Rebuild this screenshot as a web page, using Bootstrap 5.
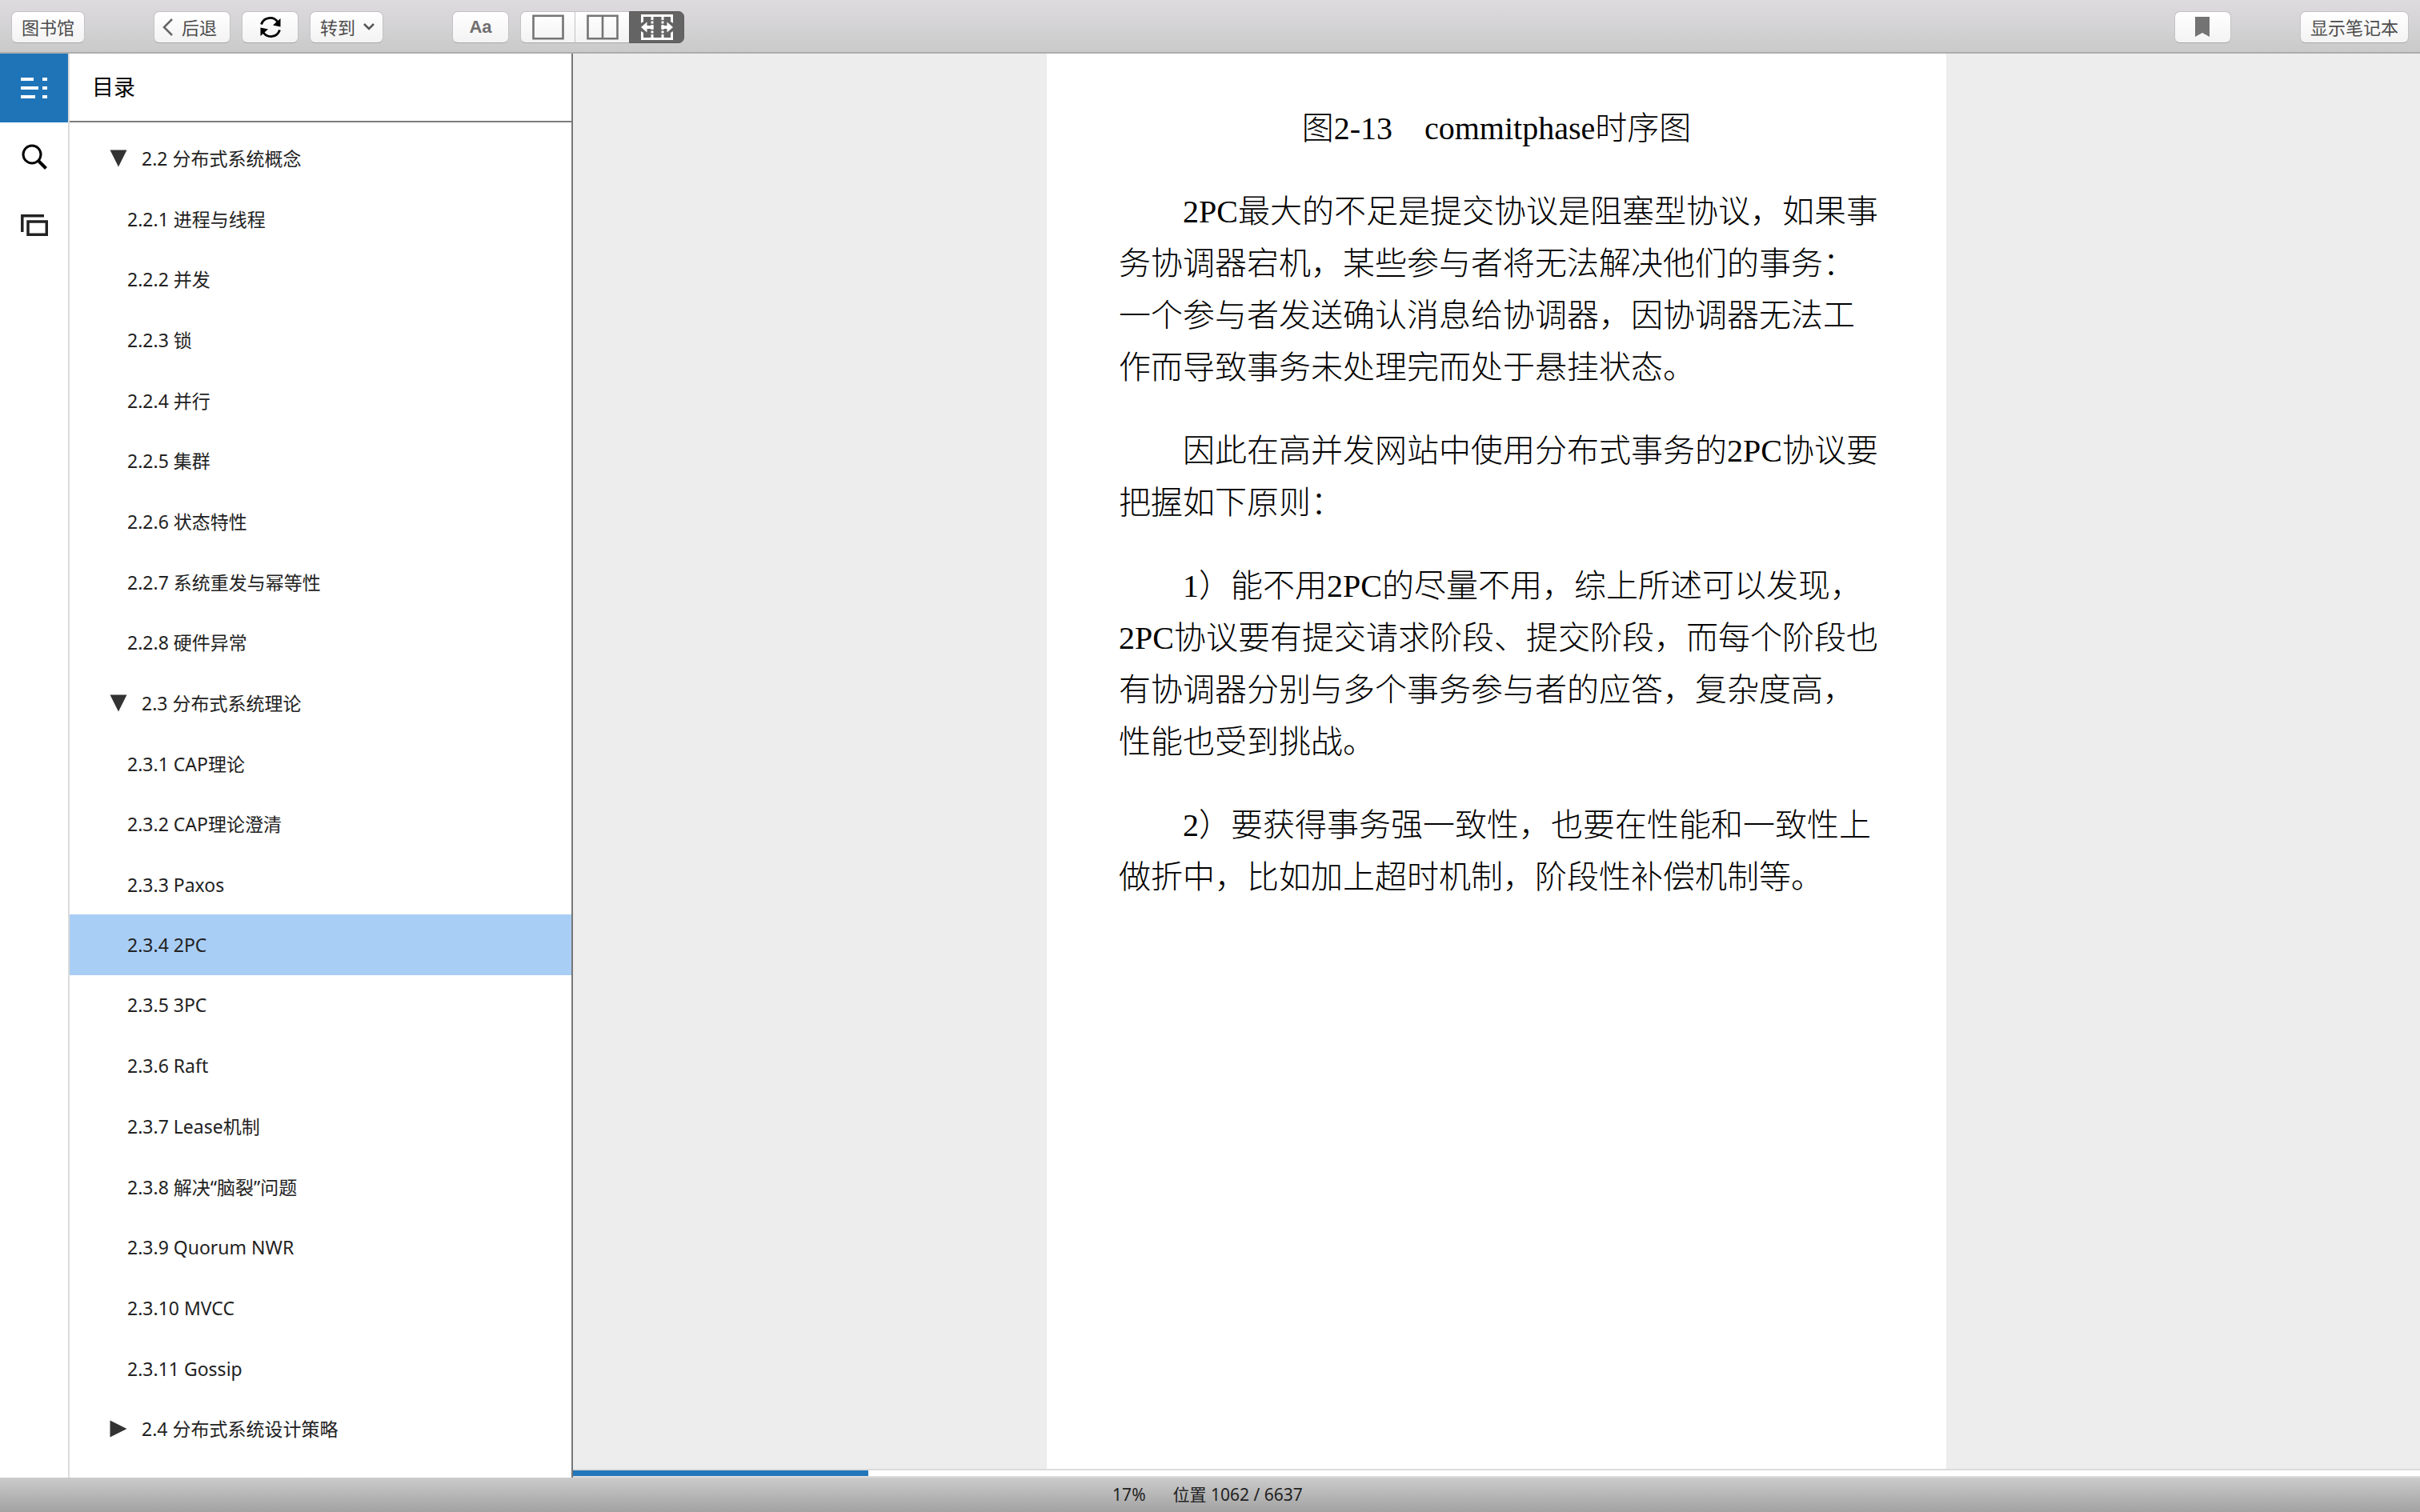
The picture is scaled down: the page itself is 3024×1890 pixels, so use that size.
<!DOCTYPE html>
<html lang="zh-CN">
<head>
<meta charset="utf-8">
<meta name="viewport" content="width=device-width, initial-scale=1">
<title>2.3.4 2PC</title>
<link href="https://cdn.jsdelivr.net/npm/bootstrap@5.3.0/dist/css/bootstrap.min.css" rel="stylesheet">
<style>
  body { font-family: "Noto Sans", "Noto Sans CJK SC", sans-serif; color: #222; background: #fff; }
  svg { display: block; flex: none; }

  .toolbar { height: 67px; padding: 3px 14px 0; border-bottom: 2px solid #adadad; background: linear-gradient(#dedbdf, #cacaca); }
  .tool { --bs-btn-color: #4d4d4d; --bs-btn-bg: transparent; --bs-btn-border-color: transparent; --bs-btn-border-radius: 7px;
    --bs-btn-padding-x: 12px; --bs-btn-padding-y: 0; --bs-btn-font-size: 22px; --bs-btn-line-height: 38px;
    height: 40px; white-space: nowrap; background: linear-gradient(#fff, #f3f3f3);
    border: 1px solid #c4c2c5; border-bottom-color: #a9a9a9; }
  .tool-icon { width: 71px; padding: 0; }
  .tool-gap { margin-left: 86px; }
  .tool-set { gap: 14px; }
  .tool-aa { font-family: "Liberation Sans", sans-serif; font-weight: 700; color: #6f6f6f; }
  .views .tool { width: 69px; padding: 0; color: #737573; }
  .views .tool.active { color: #fff; background: #646464; border-color: #5b5b5b; }

  .rail { width: 87px; border-right: 2px solid #dcdcdc; }
  .rail-btn { height: 86px; border: 0; border-radius: 0; padding: 0; color: #111; }
  .rail-btn.active { background: #1f74b8; color: #fff; }

  .contents { width: 629px; border-right: 2px solid #777; }
  .contents-head { height: 86px; padding-left: 28px; border-bottom: 2px solid #7c7c7c; font-size: 27px; color: #000; }
  .toc { padding: 7px 0 23px; --bs-list-group-color: #222; --bs-list-group-bg: transparent; }
  .toc .list-group-item { border: 0; padding: 0 16px 0 72px; font-size: 23px; line-height: 36px; }
  .toc .chapter { padding-left: 50px; gap: 18px; }
  .toc .list-group-item.active { background: #a9cef6; color: #222; }

  .reader { background: #ededed; }
  .sheet { width: 100%; max-width: 1124px; padding: 61px 90px; background: #fff; color: #000;
    font-family: "Liberation Serif", "Noto Sans CJK SC", serif; font-weight: 300; font-size: 40px; line-height: 65px; }
  .sheet p { margin-bottom: 39px; text-indent: 2em; white-space: nowrap; }
  .sheet figcaption { margin-bottom: 39px; text-align: center; }
  .read-track { height: 11px; border-radius: 0; border-top: 2px solid #dcdcdc; border-bottom: 2px solid #dcdcdc; background: #fff; }
  .read-track .progress-bar { background: #2277ba; }

  .statusbar { height: 43px; gap: 34px; padding-right: 6px; font-size: 21px; background: linear-gradient(#cbcbcb, #a2a2a2); }
</style>
</head>
<body class="vh-100 d-flex flex-column overflow-hidden">

<header class="toolbar d-flex align-items-center flex-shrink-0">
  <button type="button" class="btn tool">图书馆</button>
  <div class="tool-gap tool-set d-flex">
    <button type="button" class="btn tool d-flex align-items-center gap-2 px-2">
      <svg width="18" height="24" viewBox="0 0 18 24" fill="none" stroke="#666" stroke-width="2.5"><path d="M14 2 4 12l10 10"/></svg>
      <span class="pe-2">后退</span>
    </button>
    <button type="button" class="btn tool tool-icon d-flex align-items-center justify-content-center" aria-label="同步">
      <svg width="26" height="26" viewBox="0 0 26 26"><g fill="none" stroke="#000" stroke-width="2.8"><path d="M1.500 9.500A11.500 11.500 0 0 1 22 6.500"/><path d="M24.500 16.500A11.500 11.500 0 0 1 4 19.500"/></g><path d="M25.500 2v10.500l-9.500-2zM.5 24V13.500l9.500 2z"/></svg>
    </button>
    <button type="button" class="btn tool d-flex align-items-center gap-2 px-2">
      <span class="ps-1">转到</span>
      <svg width="18" height="12" viewBox="0 0 18 12" fill="none" stroke="#555" stroke-width="2.5"><path d="m3 2 6 6 6-6"/></svg>
    </button>
  </div>
  <div class="tool-gap tool-set d-flex">
    <button type="button" class="btn tool tool-icon tool-aa">Aa</button>
    <div class="btn-group views" role="group" aria-label="页面视图">
      <button type="button" class="btn tool d-flex align-items-center justify-content-center" aria-label="单栏">
        <svg width="40" height="32" viewBox="0 0 40 32" fill="none" stroke="currentColor" stroke-width="2.6"><path d="M1.500 1.800h37v28.400h-37z"/></svg>
      </button>
      <button type="button" class="btn tool d-flex align-items-center justify-content-center" aria-label="双栏">
        <svg width="40" height="32" viewBox="0 0 40 32" fill="none" stroke="currentColor" stroke-width="2.6"><path d="M1.500 1.800h37v28.400h-37zM20 2v28"/></svg>
      </button>
      <button type="button" class="btn tool active d-flex align-items-center justify-content-center" aria-label="多栏">
        <svg width="40" height="32" viewBox="0 0 40 32"><path fill="#fff" d="M0 0h40v32H0z"/><path fill="#646464" d="M3 3h9.500v26H3zM15.500 3h10v26h-10zM28.500 3H37v26h-8.500zM12 7h4v1.500h-4zM12 11.500h4V13h-4zM12 19h4v1.500h-4zM12 23.500h4V25h-4zM25 7h4v1.500h-4zM25 11.500h4V13h-4zM25 19h4v1.500h-4zM25 23.500h4V25h-4zM0 11l3-2v14l-3-2zM40 11l-3-2v14l3-2z"/><path fill="#fff" d="M0 16l7.500-6.500V14h8v4h-8v4.500zM40 16l-7.500-6.500V14h-7v4h7v4.500z"/></svg>
      </button>
    </div>
  </div>
  <div class="ms-auto d-flex">
    <button type="button" class="btn tool tool-icon d-flex align-items-center justify-content-center" aria-label="书签">
      <svg width="18" height="26" viewBox="0 0 18 26" fill="#737373"><path d="M0 0h18v25l-9-5-9 5z"/></svg>
    </button>
    <button type="button" class="btn tool tool-gap">显示笔记本</button>
  </div>
</header>

<div class="d-flex flex-grow-1 overflow-hidden">
  <nav class="rail d-flex flex-column flex-shrink-0" aria-label="侧栏">
    <button type="button" class="btn rail-btn active d-flex align-items-center justify-content-center" aria-label="目录">
      <svg width="34" height="26" viewBox="0 0 34 26" fill="currentColor"><path d="M0 0h16v4H0zM0 11h22v4H0zM0 22h18v4H0zM27 0h6v4h-6zM27 11h6v4h-6zM27 22h6v4h-6z"/></svg>
    </button>
    <button type="button" class="btn rail-btn d-flex align-items-center justify-content-center" aria-label="搜索">
      <svg width="32" height="32" viewBox="0 0 32 32" fill="none" stroke="#000"><circle cx="13" cy="13" r="11" stroke-width="3"/><path d="m20.500 20.500 10 10" stroke-width="4"/></svg>
    </button>
    <button type="button" class="btn rail-btn d-flex align-items-center justify-content-center" aria-label="卡片">
      <svg width="34" height="28" viewBox="0 0 34 28" fill="none" stroke="#222" stroke-width="3.5"><path d="M29 1.800H1.800V22M9 9h23.300v16.200H9z"/></svg>
    </button>
  </nav>

  <aside class="contents d-flex flex-column flex-shrink-0">
    <div class="contents-head d-flex align-items-center flex-shrink-0">目录</div>
    <div class="toc list-group list-group-flush flex-grow-1">
      <a href="#" class="list-group-item chapter flex-fill d-flex align-items-center"><svg width="22" height="22" viewBox="0 0 22 22" fill="#333"><path d="M.5.500h21L11 21.500z"/></svg>2.2 分布式系统概念</a>
      <a href="#" class="list-group-item flex-fill d-flex align-items-center">2.2.1 进程与线程</a>
      <a href="#" class="list-group-item flex-fill d-flex align-items-center">2.2.2 并发</a>
      <a href="#" class="list-group-item flex-fill d-flex align-items-center">2.2.3 锁</a>
      <a href="#" class="list-group-item flex-fill d-flex align-items-center">2.2.4 并行</a>
      <a href="#" class="list-group-item flex-fill d-flex align-items-center">2.2.5 集群</a>
      <a href="#" class="list-group-item flex-fill d-flex align-items-center">2.2.6 状态特性</a>
      <a href="#" class="list-group-item flex-fill d-flex align-items-center">2.2.7 系统重发与幂等性</a>
      <a href="#" class="list-group-item flex-fill d-flex align-items-center">2.2.8 硬件异常</a>
      <a href="#" class="list-group-item chapter flex-fill d-flex align-items-center"><svg width="22" height="22" viewBox="0 0 22 22" fill="#333"><path d="M.5.500h21L11 21.500z"/></svg>2.3 分布式系统理论</a>
      <a href="#" class="list-group-item flex-fill d-flex align-items-center">2.3.1 CAP理论</a>
      <a href="#" class="list-group-item flex-fill d-flex align-items-center">2.3.2 CAP理论澄清</a>
      <a href="#" class="list-group-item flex-fill d-flex align-items-center">2.3.3 Paxos</a>
      <a href="#" class="list-group-item active flex-fill d-flex align-items-center" aria-current="true">2.3.4 2PC</a>
      <a href="#" class="list-group-item flex-fill d-flex align-items-center">2.3.5 3PC</a>
      <a href="#" class="list-group-item flex-fill d-flex align-items-center">2.3.6 Raft</a>
      <a href="#" class="list-group-item flex-fill d-flex align-items-center">2.3.7 Lease机制</a>
      <a href="#" class="list-group-item flex-fill d-flex align-items-center">2.3.8 解决“脑裂”问题</a>
      <a href="#" class="list-group-item flex-fill d-flex align-items-center">2.3.9 Quorum NWR</a>
      <a href="#" class="list-group-item flex-fill d-flex align-items-center">2.3.10 MVCC</a>
      <a href="#" class="list-group-item flex-fill d-flex align-items-center">2.3.11 Gossip</a>
      <a href="#" class="list-group-item chapter flex-fill d-flex align-items-center"><svg width="22" height="22" viewBox="0 0 22 22" fill="#333"><path d="M.5.500v21L21.500 11z"/></svg>2.4 分布式系统设计策略</a>
    </div>
  </aside>

  <main class="reader d-flex flex-column flex-grow-1">
    <article class="sheet mx-auto flex-grow-1">
      <figure class="m-0"><figcaption>图2-13　commitphase时序图</figcaption></figure>
      <p>2PC最大的不足是提交协议是阻塞型协议，如果事<br>务协调器宕机，某些参与者将无法解决他们的事务：<br>一个参与者发送确认消息给协调器，因协调器无法工<br>作而导致事务未处理完而处于悬挂状态。</p>
      <p>因此在高并发网站中使用分布式事务的2PC协议要<br>把握如下原则：</p>
      <p>1）能不用2PC的尽量不用，综上所述可以发现，<br>2PC协议要有提交请求阶段、提交阶段，而每个阶段也<br>有协调器分别与多个事务参与者的应答，复杂度高，<br>性能也受到挑战。</p>
      <p>2）要获得事务强一致性，也要在性能和一致性上<br>做折中，比如加上超时机制，阶段性补偿机制等。</p>
    </article>
    <div class="progress read-track flex-shrink-0" role="progressbar" aria-label="阅读进度" aria-valuenow="17" aria-valuemin="0" aria-valuemax="100">
      <div class="progress-bar" style="width: 16%"></div>
    </div>
  </main>
</div>

<footer class="statusbar d-flex align-items-center justify-content-center flex-shrink-0">
  <span>17%</span><span>位置 1062 / 6637</span>
</footer>

<script src="https://cdn.jsdelivr.net/npm/bootstrap@5.3.0/dist/js/bootstrap.bundle.min.js"></script>
</body>
</html>
